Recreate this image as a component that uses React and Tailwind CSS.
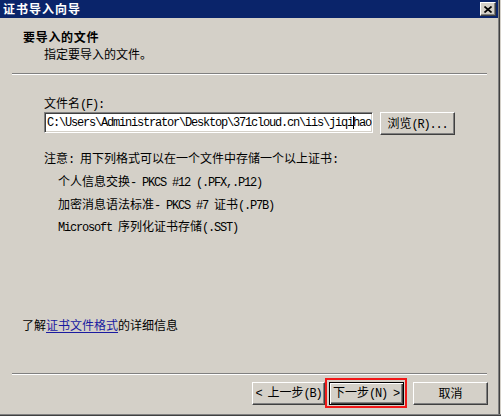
import React from 'react';

const ASCII = /^[\x20-\x7e]+$/;

// SimSun-like text: CJK at 12px, ASCII half-width (6px per char)
const Txt = ({ children, className = '' }) => {
  const parts = children.split(/([\x20-\x7e]+)/).filter(Boolean);
  return (
    <span className={`whitespace-pre ${className}`}>
      {parts.map((p, i) =>
        ASCII.test(p) ? (
          <span key={i} className="font-['Liberation_Mono',monospace] text-[12px] tracking-[-1.2px]">
            {p}
          </span>
        ) : (
          <span key={i}>{p}</span>
        )
      )}
    </span>
  );
};

const Line = ({ children, className = '' }) => (
  <div className={`h-[16px] flex items-center whitespace-pre ${className}`}>{children}</div>
);

const Button = ({ label, className = '' }) => (
  <div
    className={`h-[23px] flex items-center justify-center bg-[#d4d0c8] border border-t-white border-l-white border-r-[#404040] border-b-[#404040] shadow-[inset_-1px_-1px_0_#808080] ${className}`}
  >
    <Txt>{label}</Txt>
  </div>
);

const Separator = () => (
  <div className="ml-[12px] w-[475px] border-t border-t-[#808080] border-b border-b-white" />
);

const CloseBtn = () => (
  <div className="w-[16px] h-[14px] flex items-center justify-center bg-[#d4d0c8] border border-t-white border-l-white border-r-[#404040] border-b-[#404040] shadow-[inset_-1px_-1px_0_#808080]">
    <svg width="8" height="7" viewBox="0 0 8 7">
      <path d="M0.5 0.5 L7.5 6.5 M7.5 0.5 L0.5 6.5" stroke="#000" strokeWidth="1.7" />
    </svg>
  </div>
);

export default function App() {
  return (
    <div className="w-[501px] h-[416px] bg-[#d4d0c8] flex flex-col font-['Noto_Sans_CJK_SC',sans-serif] text-[12px] leading-[16px] text-black">
      <div className="flex flex-1">
        <div className="w-[498px] flex flex-col">
          {/* title bar */}
          <div className="h-[18px] bg-[#0a246a] flex items-center justify-between pl-[3px] pr-[2px]">
            <span className="text-white font-bold tracking-[1px]">证书导入向导</span>
            <CloseBtn />
          </div>

          {/* header */}
          <Line className="mt-[11px] pl-[23px] font-bold tracking-[0.7px]">要导入的文件</Line>
          <Line className="mt-[1px] pl-[44px]">
            <Txt>指定要导入的文件。</Txt>
          </Line>
          <div className="mt-[11px]">
            <Separator />
          </div>

          {/* file field */}
          <Line className="mt-[21px] pl-[44px]">
            <Txt>文件名(F):</Txt>
          </Line>
          <div className="flex pl-[44px]">
            <div className="w-[329px] h-[21px] bg-white flex items-center pl-[2px] overflow-hidden border border-t-[#808080] border-l-[#808080] border-r-white border-b-white shadow-[inset_1px_1px_0_#404040,inset_-1px_-1px_0_#d4d0c8]">
              <span className="whitespace-pre font-['Liberation_Mono',monospace] text-[12px] tracking-[-1.2px]">
                {'C:\\Users\\Administrator\\Desktop\\371cloud.cn\\iis\\jiqi'}
              </span>
              <span className="inline-block w-px h-[13px] bg-black -mr-px" />
              <span className="whitespace-pre font-['Liberation_Mono',monospace] text-[12px] tracking-[-1.2px]">hao</span>
            </div>
            <Button label="浏览(R)..." className="ml-[7px] w-[75px] h-[21px]" />
          </div>

          {/* formats */}
          <Line className="mt-[16px] pl-[44px]">
            <Txt>注意: 用下列格式可以在一个文件中存储一个以上证书:</Txt>
          </Line>
          <Line className="mt-[7px] pl-[58px]">
            <Txt>个人信息交换- PKCS #12 (.PFX,.P12)</Txt>
          </Line>
          <Line className="mt-[7px] pl-[58px]">
            <Txt>加密消息语法标准- PKCS #7 证书(.P7B)</Txt>
          </Line>
          <Line className="mt-[6px] pl-[58px]">
            <Txt>Microsoft 序列化证书存储(.SST)</Txt>
          </Line>

          {/* link */}
          <Line className="mt-[82px] pl-[22px]">
            了解<span className="text-[#1a1aa0] underline underline-offset-2">证书文件格式</span>的详细信息
          </Line>

          <div className="mt-[40px]">
            <Separator />
          </div>

          {/* wizard buttons */}
          <div className="mt-[3px] h-[30px] flex items-center pl-[252px]">
            <Button label="< 上一步(B)" className="w-[73px]" />
            <div className="w-[82px] h-[30px] border-2 border-[#f01818] flex items-center justify-center">
              <div className="w-[75px] h-[23px] flex items-center justify-center bg-[#d4d0c8] border border-black shadow-[inset_1px_1px_0_#fff,inset_-1px_-1px_0_#404040,inset_-2px_-2px_0_#808080]">
                <Txt>下一步(N) &gt;</Txt>
              </div>
            </div>
            <Button label="取消" className="ml-[6px] w-[75px]" />
          </div>
        </div>
        <div className="w-px bg-[#808080]" />
        <div className="w-px bg-[#404040]" />
        <div className="w-px bg-[#d4d0c8]" />
      </div>
      <div className="h-px bg-[#808080]" />
      <div className="h-px bg-[#404040]" />
    </div>
  );
}
